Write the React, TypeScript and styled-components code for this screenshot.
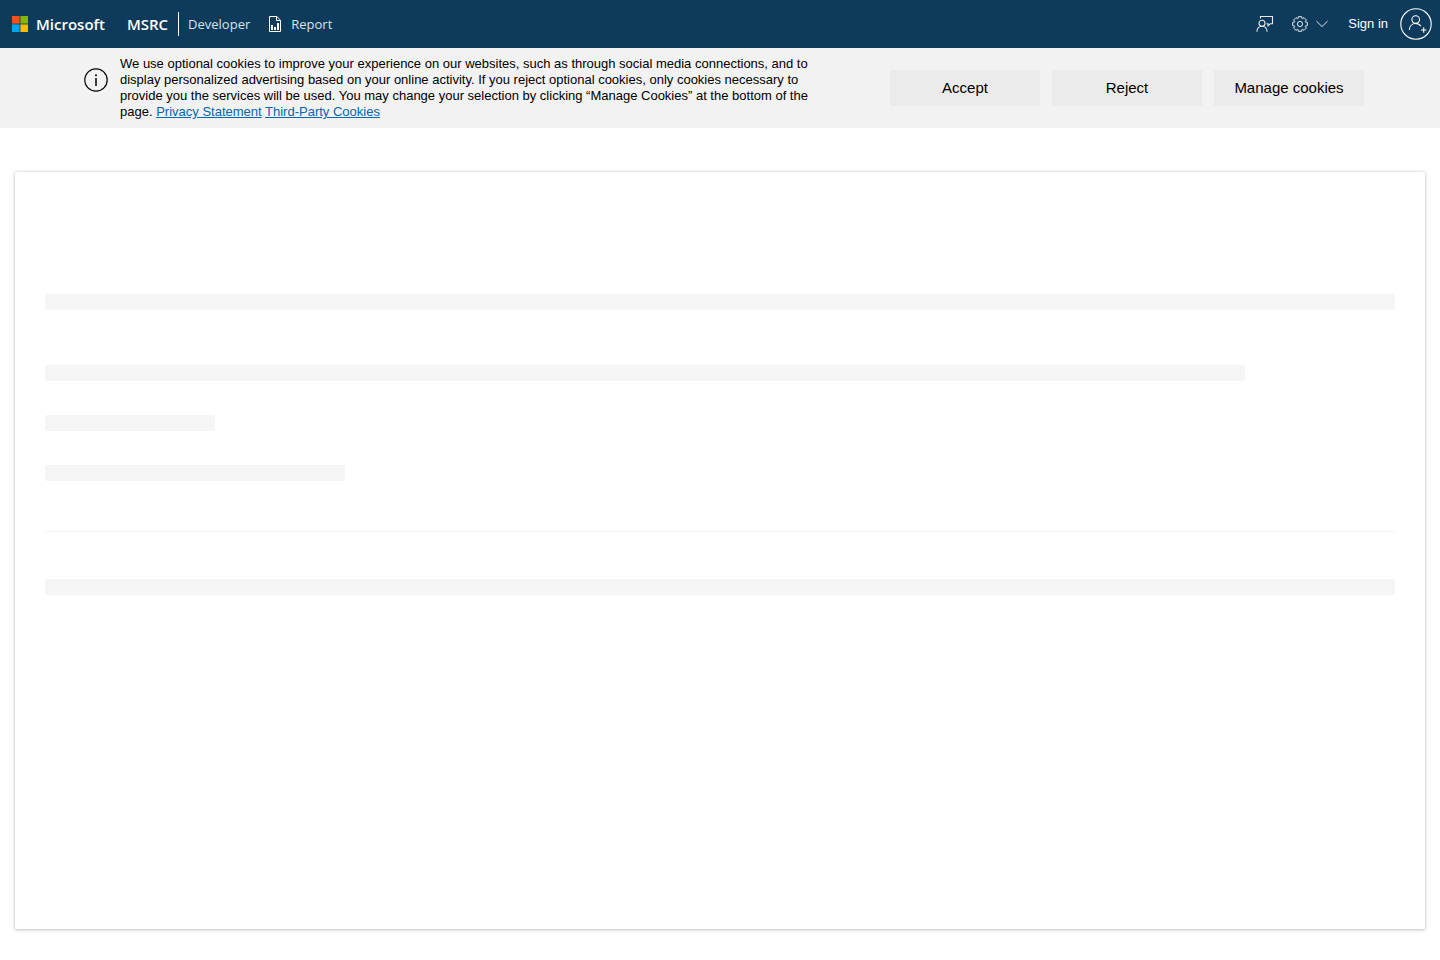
import React from "react";
import styled, { createGlobalStyle } from "styled-components";

const GlobalStyle = createGlobalStyle`
  *, *::before, *::after { box-sizing: border-box; }
  body { margin: 0; background: #fff; color: #000; font-family: "Liberation Sans", Arial, sans-serif; }
  svg { display: block; flex: none; }
`;

const Page = styled.div`
  display: flex;
  flex-direction: column;
  min-height: 100vh;
`;

const Header = styled.header`
  display: flex;
  align-items: center;
  justify-content: space-between;
  height: 48px;
  padding: 0 8px 0 12px;
  background: #0e3a5b;
  color: #fff;
`;

const Nav = styled.nav`
  display: flex;
  align-items: center;
  font-family: "Open Sans", "Noto Sans", sans-serif;
`;

const BrandLink = styled.a`
  display: flex;
  align-items: center;
  gap: 8px;
  color: #fff;
  font-size: 15px;
  line-height: 24px;
  font-weight: 600;
  text-decoration: none;
`;

const SiteLink = styled(BrandLink)`
  margin-left: 22px;
  padding-right: 10px;
  border-right: 1px solid #fff;
`;

const NavLink = styled.a<{ $gap: number }>`
  display: flex;
  align-items: center;
  gap: 9px;
  margin-left: ${(p) => p.$gap}px;
  color: #dbe2e8;
  font-size: 13px;
  line-height: 24px;
  text-decoration: none;
`;

const Tools = styled.div`
  display: flex;
  align-items: center;
`;

const ToolButton = styled.button`
  display: flex;
  align-items: center;
  gap: 8px;
  margin-right: 18px;
  padding: 0;
  border: 0;
  background: none;
  color: #e3e9ee;
  cursor: pointer;
`;

const AccountButton = styled(ToolButton)`
  gap: 12px;
  margin: 0 0 0 2px;
  color: #fff;
  font-family: inherit;
  font-size: 13px;
  line-height: 16px;
`;

const CookieBanner = styled.section`
  display: flex;
  align-items: center;
  justify-content: space-between;
  min-height: 80px;
  padding: 8px 76px 8px 84px;
  background: #f2f2f2;
`;

const Notice = styled.div`
  display: flex;
  align-items: flex-start;
  gap: 12px;
  max-width: 740px;
`;

const NoticeIcon = styled.span`
  padding-top: 12px;
`;

const NoticeText = styled.p`
  margin: 0;
  max-width: 704px;
  font-size: 13px;
  line-height: 16px;
`;

const PolicyLink = styled.a`
  color: #0067b8;
  text-decoration: underline;
`;

const Choices = styled.div`
  display: flex;
  flex: none;
  gap: 12px;
`;

const ChoiceButton = styled.button`
  width: 150px;
  height: 36px;
  padding: 0;
  border: 0;
  background: #ebebeb;
  color: #000;
  font-family: inherit;
  font-size: 15px;
  line-height: 20px;
  cursor: pointer;
`;

const Card = styled.main`
  flex: 1;
  margin: 44px 15px 31px;
  padding: 122px 30px 40px;
  border-radius: 2px;
  background: #fff;
  box-shadow: 0 1px 4px rgba(0, 0, 0, 0.18), 0 0 2px 1px rgba(0, 0, 0, 0.07);
`;

const SkeletonGroup = styled.div`
  display: flex;
  flex-direction: column;
  gap: 34px;
  padding: 55px 0 50px;
`;

const SkeletonBar = styled.div<{ $width?: number }>`
  width: ${(p) => (p.$width ? `${p.$width}px` : "100%")};
  max-width: 100%;
  height: 16px;
  border-radius: 2px;
  background: #f5f5f5;
`;

const Divider = styled.hr`
  height: 1px;
  margin: 0 0 47px;
  border: 0;
  background: #f3f3f3;
`;

const MicrosoftLogo = () => (
  <svg width="16" height="16" viewBox="0 0 16 16" aria-hidden="true">
    <path fill="#f25022" d="M0 0h7.6v7.6H0z" />
    <path fill="#7fba00" d="M8.4 0H16v7.6H8.4z" />
    <path fill="#00a4ef" d="M0 8.4h7.6V16H0z" />
    <path fill="#ffb900" d="M8.4 8.4H16V16H8.4z" />
  </svg>
);

const ReportIcon = () => (
  <svg width="14" height="16" viewBox="0 0 14 16" fill="none" stroke="#fff" aria-hidden="true">
    <path d="M1.500.5h7.300l3.700 3.700v11.300h-11zM8.500.5v4h4" />
    <path d="M3 9h2v5H3zM6 11h2v3H6zM9 7h2v7H9z" fill="#fff" stroke="none" />
  </svg>
);

const FeedbackIcon = () => (
  <svg width="18" height="18" viewBox="0 0 18 18" fill="none" stroke="currentColor" strokeWidth="1.100" aria-hidden="true">
    <path d="M4.500 3.600V1.500h12v7.300h-2.200l-2.300 2V8.800h-1.500" />
    <circle cx="6" cy="8.200" r="3" />
    <path d="M.9 16.800c.2-3.400 2.300-5.600 5.100-5.600s4.900 2.200 5.100 5.600" />
  </svg>
);

const GearIcon = () => (
  <svg width="16" height="16" viewBox="0 0 16 16" fill="none" stroke="currentColor" strokeLinejoin="round" aria-hidden="true">
    <path d="M6.300.7 9.700.7 9.900 2.500 10.500 2.700 12 1.600 14.400 4 13.300 5.500 13.500 6.100 15.300 6.300 15.300 9.700 13.500 9.900 13.300 10.500 14.400 12 12 14.400 10.500 13.300 9.900 13.500 9.700 15.300 6.300 15.300 6.100 13.500 5.500 13.300 4 14.400 1.600 12 2.700 10.500 2.500 9.900.7 9.700.7 6.300 2.500 6.100 2.700 5.500 1.600 4 4 1.600 5.500 2.700 6.100 2.500z" />
    <circle cx="8" cy="8" r="2.600" />
  </svg>
);

const ChevronIcon = () => (
  <svg width="12" height="8" viewBox="0 0 12 8" fill="none" stroke="currentColor" aria-hidden="true">
    <path d="m.5 1.200 5.500 5.400 5.500-5.400" />
  </svg>
);

const AccountIcon = () => (
  <svg width="32" height="32" viewBox="0 0 32 32" fill="none" stroke="currentColor" strokeWidth="1.100" aria-hidden="true">
    <circle cx="16" cy="16" r="15.200" />
    <circle cx="15.700" cy="11.600" r="3.800" />
    <path d="M9.300 22c.2-3.900 2.800-6.500 6.400-6.500 2.300 0 4.100 1 5.300 2.800M23.700 19.300v5.400M21 22h5.400" />
  </svg>
);

const InfoIcon = () => (
  <svg width="24" height="24" viewBox="0 0 24 24" fill="none" stroke="#000" aria-hidden="true">
    <circle cx="12" cy="12" r="11.200" strokeWidth="1.200" />
    <path d="M12 10v8" strokeWidth="1.500" />
    <circle cx="12" cy="7.300" r="1" fill="#000" stroke="none" />
  </svg>
);

export default function App() {
  return (
    <Page>
      <GlobalStyle />
      <Header>
        <Nav aria-label="Main">
          <BrandLink href="#"><MicrosoftLogo />Microsoft</BrandLink>
          <SiteLink href="#">MSRC</SiteLink>
          <NavLink href="#" $gap={9}>Developer</NavLink>
          <NavLink href="#" $gap={18}><ReportIcon />Report</NavLink>
        </Nav>
        <Tools>
          <ToolButton type="button" aria-label="Feedback"><FeedbackIcon /></ToolButton>
          <ToolButton type="button" aria-label="Settings"><GearIcon /><ChevronIcon /></ToolButton>
          <AccountButton type="button">Sign in<AccountIcon /></AccountButton>
        </Tools>
      </Header>
      <CookieBanner aria-label="Cookie consent">
        <Notice>
          <NoticeIcon><InfoIcon /></NoticeIcon>
          <NoticeText>
            We use optional cookies to improve your experience on our websites, such as through social media connections, and to display personalized advertising based on your online activity. If you reject optional cookies, only cookies necessary to provide you the services will be used. You may change your selection by clicking “Manage Cookies” at the bottom of the page.{" "}
            <PolicyLink href="#">Privacy Statement</PolicyLink>{" "}
            <PolicyLink href="#">Third-Party Cookies</PolicyLink>
          </NoticeText>
        </Notice>
        <Choices>
          <ChoiceButton type="button">Accept</ChoiceButton>
          <ChoiceButton type="button">Reject</ChoiceButton>
          <ChoiceButton type="button">Manage cookies</ChoiceButton>
        </Choices>
      </CookieBanner>
      <Card aria-busy="true">
        <SkeletonBar />
        <SkeletonGroup>
          <SkeletonBar $width={1200} />
          <SkeletonBar $width={170} />
          <SkeletonBar $width={300} />
        </SkeletonGroup>
        <Divider />
        <SkeletonBar />
      </Card>
    </Page>
  );
}
